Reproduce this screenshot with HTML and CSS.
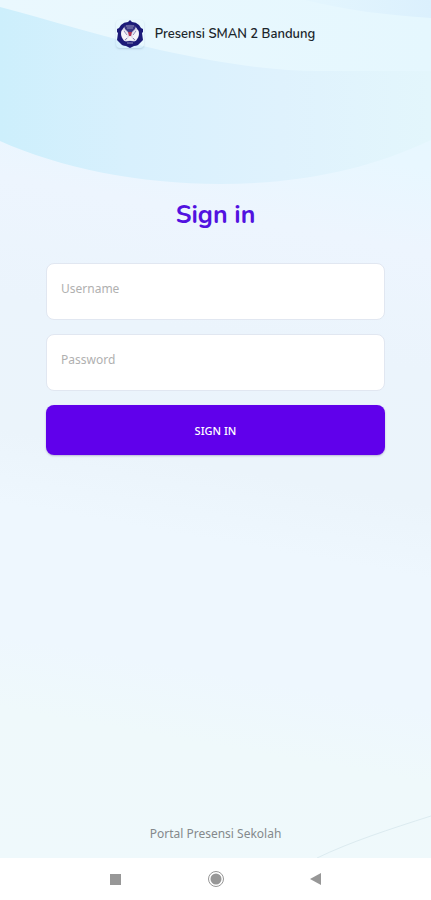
FILE: index.html
```html
<!DOCTYPE html>
<html lang="id">
<head>
    <meta charset="UTF-8">
    <meta name="viewport" content="width=device-width, initial-scale=1.0">
    <title>Presensi SMAN 2 Bandung</title>
    <link rel="stylesheet" href="styles.css">
</head>
<body>
    <div class="page">
        <svg class="background" viewBox="0 0 431 858" preserveAspectRatio="none" aria-hidden="true">
            <defs>
                <linearGradient id="top" x1="0" y1="0" x2="1" y2="0">
                    <stop offset="0" stop-color="#eaf8fe"/>
                    <stop offset="1" stop-color="#e5f7fe"/>
                </linearGradient>
                <linearGradient id="wave" x1="0" y1="0" x2="1" y2="0">
                    <stop offset="0" stop-color="#cdeffc"/>
                    <stop offset="0.3" stop-color="#d8f0fd"/>
                    <stop offset="0.65" stop-color="#dff2fd"/>
                    <stop offset="1" stop-color="#e3f6fc"/>
                </linearGradient>
                <linearGradient id="corner" x1="0" y1="0" x2="1" y2="0">
                    <stop offset="0" stop-color="#e4f6fe"/>
                    <stop offset="1" stop-color="#dbf0fd"/>
                </linearGradient>
            </defs>
            <path fill="url(#top)" d="M0 0H431V80H0z"/>
            <path fill="url(#wave)" d="M0 7C50 20 100 36 160 50C220 63 270 71 320 71H431V140C370 169 300 184 220 184C140 184 60 168 0 141z"/>
            <path fill="url(#corner)" d="M305 0C345 10 385 15 431 18V0z"/>
            <path fill="none" stroke="#dcebf0" d="M317 858C350 842 390 829 431 816"/>
        </svg>

        <header class="header">
            <svg class="logo" viewBox="0 0 28 28" aria-hidden="true">
                <path fill="#1c1a78" d="M14 0L16 2Q20 2 23 5L25 8L27 9L27 12L26 13L27 20L24 23Q22 26 18 26L14 28L10 26Q6 26 4 23L1 20L2 13L1 12L1 9L3 8L5 5Q8 2 12 2z"/>
                <circle cx="14" cy="14" r="9" fill="#d9d8e8"/>
                <path fill="#3a3784" d="M8 6Q14 3 20 6L19 9L15 13H13L9 9z"/>
                <path fill="none" stroke="#8c8ab8" d="M10 6H18M11 8H17"/>
                <path fill="#f6f5fa" d="M6 10L9 11L12 14L11 18L8 20Q4 15 6 10zM22 10L19 11L16 14L17 18L20 20Q24 15 22 10z"/>
                <path fill="none" stroke="#8d8bb8" d="M8 11L11 15M20 11L17 15M11 18L9 20M17 18L19 20"/>
                <path fill="#b23355" d="M12 12H16L15 16H13z"/>
                <path fill="#f6f5fa" d="M12 18L14 16L16 18L18 21L14 20L10 21z"/>
                <path fill="#1c1a78" d="M8 22Q14 20 20 22L17 25H11z"/>
                <path fill="none" stroke="#8c8ab8" d="M11 23H17"/>
            </svg>
            <span class="brand">Presensi SMAN 2 Bandung</span>
        </header>

        <main class="login">
            <h1>Sign in</h1>
            <form class="login-form">
                <input type="text" name="username" placeholder="Username" aria-label="Username">
                <input type="password" name="password" placeholder="Password" aria-label="Password">
                <button type="submit">SIGN IN</button>
            </form>
        </main>

        <footer class="footer">Portal Presensi Sekolah</footer>
    </div>

    <nav class="navbar">
        <button type="button" aria-label="Recent apps">
            <svg viewBox="0 0 18 18"><path d="M3 4H14V15H3z"/></svg>
        </button>
        <button type="button" aria-label="Home">
            <svg viewBox="0 0 18 18"><circle class="ring" cx="9" cy="9" r="7.500"/><circle cx="9" cy="9" r="5.500"/></svg>
        </button>
        <button type="button" aria-label="Back">
            <svg viewBox="0 0 18 18"><path d="M3 9L14 3V15z"/></svg>
        </button>
    </nav>
</body>
</html>
```

FILE: styles.css
```css
* {
    box-sizing: border-box;
}

body {
    margin: 0;
    min-height: 100vh;
    display: flex;
    flex-direction: column;
    font-family: "Noto Sans", "Open Sans", sans-serif;
    font-size: 12px;
}

.page {
    position: relative;
    z-index: 0;
    flex: 1;
    display: flex;
    flex-direction: column;
    background: linear-gradient(190deg, #e6f7ff 0%, #e8f7ff 18%, #edf5fe 27%, #ebf4fc 40%, #ebf4fb 54%, #eef7fe 62%, #eef7fe 76%, #eff9fb 84%, #eff9fc 100%);
}

.background {
    position: absolute;
    inset: 0;
    z-index: -1;
    width: 100%;
    height: 100%;
}

.header {
    display: flex;
    justify-content: center;
    align-items: center;
    gap: 11px;
    padding: 20px;
}

.logo {
    width: 28px;
    height: 28px;
    border-radius: 4px;
    box-shadow: 0 1px 2px rgba(60, 90, 120, 0.2);
}

.brand {
    font-family: "Nunito", "Lato", sans-serif;
    font-size: 13px;
    font-weight: 600;
    line-height: 20px;
    color: #1b252b;
}

.login {
    flex: 1;
    padding: 130px 46px 40px;
}

.login h1 {
    margin: 0 0 31px;
    font-family: "Nunito", "Lato", sans-serif;
    font-size: 25px;
    font-weight: 700;
    line-height: 34px;
    text-align: center;
    color: #5211e0;
}

.login-form {
    display: flex;
    flex-direction: column;
    gap: 14px;
}

.login-form input {
    width: 100%;
    height: 57px;
    padding: 10px 14px 17px;
    border: 1px solid #e1e7f1;
    border-radius: 8px;
    background: white;
    font: inherit;
    color: #333;
    outline: none;
}

.login-form input::placeholder {
    color: #b0b0b0;
    opacity: 1;
}

.login-form button {
    height: 50px;
    border: none;
    border-radius: 8px;
    background: #6000eb;
    box-shadow: 0 1px 2px rgba(70, 40, 120, 0.3);
    color: white;
    font: inherit;
    font-size: 11px;
    font-weight: 500;
    cursor: pointer;
}

.footer {
    padding: 16px;
    line-height: 16px;
    text-align: center;
    color: #84898c;
}

.navbar {
    display: flex;
    justify-content: center;
    gap: 82px;
    padding: 12px 0;
    background: white;
}

.navbar button {
    padding: 0;
    border: none;
    background: none;
    cursor: pointer;
}

.navbar svg {
    display: block;
    width: 18px;
    height: 18px;
    fill: #979797;
}

.navbar .ring {
    fill: none;
    stroke: #979797;
}
```
